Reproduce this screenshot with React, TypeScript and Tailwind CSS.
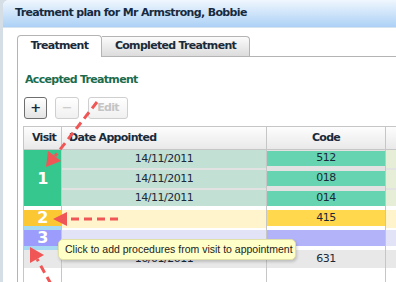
import React from "react";

type Seg = { h: string; cls: string; text?: string; tcls?: string };

function Col({ w, header, hcls, segs, last }: { w: string; header?: string; hcls?: string; segs: Seg[]; last?: boolean }) {
  return (
    <div className={`${w} shrink-0 flex flex-col ${last ? "" : "border-r border-[#c6c6c6]"}`}>
      <div className={`h-[23px] shrink-0 border-b border-[#c6c6c6] bg-gradient-to-b from-[#fdfdfd] to-[#e9e9e9] flex items-center text-[11px] font-bold tracking-[-0.7px] ${hcls ?? ""}`}>
        {header}
      </div>
      {segs.map((s, i) => (
        <div key={i} className={`${s.h} shrink-0 ${s.cls} flex items-center justify-center ${s.tcls ?? ""}`}>
          {s.text}
        </div>
      ))}
      <div className="flex-1 bg-white" />
    </div>
  );
}

export default function App() {
  const visit: Seg[] = [
    { h: "h-[56px]", cls: "bg-[#36c78f]", text: "1", tcls: "text-white text-[16px] font-bold pt-[2px]" },
    { h: "h-[4px]", cls: "bg-white" },
    { h: "h-[16px]", cls: "bg-[#fbc833]", text: "2", tcls: "text-white text-[16px] font-bold" },
    { h: "h-[4px]", cls: "bg-[#a7d9f2]" },
    { h: "h-[16px]", cls: "bg-[#9b9cfb]", text: "3", tcls: "text-white text-[16px] font-bold" },
    { h: "h-[4px]", cls: "bg-[#a7d9f2]" },
    { h: "h-[18px]", cls: "bg-[#e8e8e8]" },
  ];
  const dt = "text-[11px] text-[#1a2a3a]";
  const date: Seg[] = [
    { h: "h-[18px]", cls: "bg-[#c3e0d5]", text: "14/11/2011", tcls: dt },
    { h: "h-[2px]", cls: "bg-[#e2e2e2]" },
    { h: "h-[18px]", cls: "bg-[#c3e0d5]", text: "14/11/2011", tcls: dt },
    { h: "h-[2px]", cls: "bg-[#e2e2e2]" },
    { h: "h-[16px]", cls: "bg-[#c3e0d5]", text: "14/11/2011", tcls: dt },
    { h: "h-[4px]", cls: "bg-white" },
    { h: "h-[18px]", cls: "bg-[#fff4cb]" },
    { h: "h-[2px]", cls: "bg-white" },
    { h: "h-[16px]", cls: "bg-[#e3e3f8]" },
    { h: "h-[4px]", cls: "bg-[#f4f4f8]" },
    { h: "h-[18px]", cls: "bg-[#e8e8e8]", text: "16/01/2011", tcls: dt },
  ];
  const code: Seg[] = [
    { h: "h-[1px]", cls: "bg-[#e2e2e2]" },
    { h: "h-[15px]", cls: "bg-[#66d4b0]", text: "512", tcls: dt },
    { h: "h-[5px]", cls: "bg-[#e2e2e2]" },
    { h: "h-[15px]", cls: "bg-[#66d4b0]", text: "018", tcls: dt },
    { h: "h-[5px]", cls: "bg-[#e2e2e2]" },
    { h: "h-[15px]", cls: "bg-[#66d4b0]", text: "014", tcls: dt },
    { h: "h-[4px]", cls: "bg-white" },
    { h: "h-[16px]", cls: "bg-[#ffd84d]", text: "415", tcls: dt },
    { h: "h-[4px]", cls: "bg-white" },
    { h: "h-[16px]", cls: "bg-[#b3b3fa]" },
    { h: "h-[4px]", cls: "bg-white" },
    { h: "h-[18px]", cls: "bg-[#e8e8e8]", text: "631", tcls: dt },
  ];
  const extra: Seg[] = [
    { h: "h-[18px]", cls: "bg-[#e6eed8]" },
    { h: "h-[2px]", cls: "bg-[#e2e2e2]" },
    { h: "h-[18px]", cls: "bg-[#e6eed8]" },
    { h: "h-[2px]", cls: "bg-[#e2e2e2]" },
    { h: "h-[16px]", cls: "bg-[#e6eed8]" },
    { h: "h-[4px]", cls: "bg-white" },
    { h: "h-[18px]", cls: "bg-[#fff4cb]" },
    { h: "h-[2px]", cls: "bg-white" },
    { h: "h-[16px]", cls: "bg-[#e3e3f8]" },
    { h: "h-[4px]", cls: "bg-white" },
    { h: "h-[18px]", cls: "bg-[#e8e8e8]" },
  ];

  return (
    <div className="relative w-[396px] h-[282px] overflow-hidden bg-[#d5dde5] font-['DejaVu_Sans',sans-serif] tracking-[-0.5px] text-[#1a2a3a]">
      <div className="ml-[3px] h-full bg-white rounded-tl-[6px] flex flex-col overflow-hidden">
        <div className="h-[28px] shrink-0 bg-gradient-to-b from-[#f0f6fd] to-[#acd1f6] flex items-center pl-[12px] text-[11px] font-bold tracking-[-0.65px] text-[#172a40] border-b border-[#d6e4f0]">
          Treatment plan for Mr Armstrong, Bobbie
        </div>
        <div className="flex-1 flex flex-col pl-[14px] pt-[7px] min-h-0">
          <div className="flex items-end h-[22px] shrink-0">
            <div className="w-[85px] h-[22px] border border-b-0 border-[#b4b4b4] rounded-t-[4px] bg-white flex items-center justify-center text-[11px] font-bold tracking-[-0.7px]">
              Treatment
            </div>
            <div className="flex-1 flex items-end border-b border-[#b4b4b4] h-full">
              <div className="w-[148px] h-[20px] border border-l-0 border-b-0 border-[#b4b4b4] rounded-tr-[4px] bg-gradient-to-b from-[#fbfbfb] to-[#dcdcdc] flex items-center justify-center text-[11px] font-bold tracking-[-0.7px]">
                Completed Treatment
              </div>
            </div>
          </div>
          <div className="flex-1 border-l border-[#b4b4b4] pl-[5px] flex flex-col min-h-0">
            <div className="ml-[2px] mt-[15px] h-[16px] leading-[16px] text-[11px] font-bold tracking-[-0.7px] text-[#1c6b4c]">
              Accepted Treatment
            </div>
            <div className="flex mt-[9px] ml-[1px] h-[22px] shrink-0">
              <div className="w-[23px] h-[22px] border border-[#6e6e6e] rounded-[3px] bg-gradient-to-b from-white to-[#e4e4e4] flex items-center justify-center text-[13px] font-bold">
                +
              </div>
              <div className="ml-[8px] w-[24px] h-[22px] border border-[#cfcfcf] rounded-[3px] bg-gradient-to-b from-white to-[#f0f0f0] flex items-center justify-center text-[13px] text-[#c4c4c4]">
                −
              </div>
              <div className="ml-[9px] w-[40px] h-[22px] border border-[#cfcfcf] rounded-[3px] bg-gradient-to-b from-white to-[#f0f0f0] flex items-center justify-center text-[11px] font-bold tracking-[-0.7px] text-[#c4c4c4]">
                Edit
              </div>
            </div>
            <div className="mt-[7px] flex-1 flex border-l border-t border-[#c6c6c6] min-h-0">
              <Col w="w-[38px]" header="Visit" hcls="pl-[8px]" segs={visit} />
              <Col w="w-[205px]" header="Date Appointed" hcls="pl-[7px]" segs={date} />
              <Col w="w-[119px]" header="Code" hcls="justify-center" segs={code} />
              <Col w="w-[40px]" header="" segs={extra} last />
            </div>
          </div>
        </div>
      </div>

      <div className="absolute left-[58px] top-[239px] w-[238px] h-[21px] rounded-[5px] border border-[#e2e2a8] bg-[#ffffc8] shadow-[1px_2px_3px_rgba(0,0,0,0.18)] flex items-center pl-[6px] font-['Liberation_Sans',sans-serif] tracking-normal text-[10.5px] text-[#222]">
        Click to add procedures from visit to appointment
      </div>

      <svg className="absolute inset-0 pointer-events-none" width="396" height="282" viewBox="0 0 396 282">
        <g stroke="#f05656" strokeWidth="3" strokeDasharray="8 5" fill="none">
          <line x1="97" y1="102" x2="55" y2="156" />
          <line x1="118" y1="219" x2="66" y2="219" />
          <line x1="51" y1="284" x2="37" y2="259" />
        </g>
        <g fill="#f05656">
          <polygon points="46,167 61,161 48,151" />
          <polygon points="53,219 67,212 67,226" />
          <polygon points="30,247 44,255 30,263" />
        </g>
      </svg>
    </div>
  );
}
